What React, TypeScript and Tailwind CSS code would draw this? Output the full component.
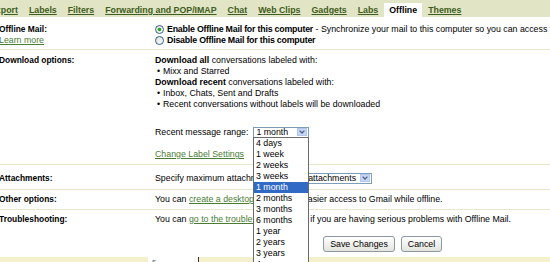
import React from "react";

const tabs = ["Export", "Labels", "Filters", "Forwarding and POP/IMAP", "Chat", "Web Clips", "Gadgets", "Labs", "Offline", "Themes"];
const ranges = ["4 days", "1 week", "2 weeks", "3 weeks", "1 month", "2 months", "3 months", "6 months", "1 year", "2 years", "3 years", "4 years"];

function Radio({ checked }: { checked?: boolean }) {
  return (
    <svg width="9" height="9" viewBox="0 0 9 9" className="shrink-0 mr-[3px]">
      <defs>
        <linearGradient id={checked ? "rg1" : "rg2"} x1="0" y1="0" x2="1" y2="1">
          <stop offset="0" stopColor="#dcdcd6" />
          <stop offset="1" stopColor="#ffffff" />
        </linearGradient>
      </defs>
      <circle cx="4.5" cy="4.5" r="4" fill={`url(#${checked ? "rg1" : "rg2"})`} stroke="#24507f" strokeWidth="0.9" />
      {checked && <circle cx="4.5" cy="4.5" r="1.8" fill="#2aa22a" />}
    </svg>
  );
}

function Chevron() {
  return (
    <svg width="6" height="4" viewBox="0 0 6 4">
      <path d="M0.6 0.6 L3 3 L5.4 0.6" fill="none" stroke="#4d6185" strokeWidth="1.3" />
    </svg>
  );
}

function SelectBox({ text, width, className = "" }: { text: string; width: string; className?: string }) {
  return (
    <div className={`flex items-center h-[11px] border border-[#7f9db9] bg-white ${width} ${className}`}>
      <span className="pl-[2px] leading-[9px] whitespace-nowrap">{text}</span>
      <span className="ml-auto mr-px w-[10px] h-[8px] bg-[#c6d5f6] border border-[#b3c6ee] flex items-center justify-center">
        <Chevron />
      </span>
    </div>
  );
}

export default function App() {
  return (
    <div className="relative w-[550px] h-[262px] overflow-hidden bg-white text-black text-[8.8px] leading-[11px] font-['Liberation_Sans',Arial,sans-serif]">
      {/* Tab bar */}
      <div className="h-[17px] bg-[#e1e4c5] flex items-end">
        <div className="flex items-end gap-[1px] ml-[-15px] whitespace-nowrap">
          {tabs.map((t) =>
            t === "Offline" ? (
              <span key={t} className="px-[5px] h-[14px] leading-[14px] bg-white font-bold text-black">
                {t}
              </span>
            ) : (
              <span key={t} className="px-[5px] h-[14px] leading-[14px] font-bold text-[#3e5d20] underline">
                {t}
              </span>
            )
          )}
        </div>
      </div>

      {/* Offline Mail */}
      <div className="flex pt-[7px] pb-[3px] border-b border-[#e7e7d0]">
        <div className="w-[156px] shrink-0 ml-[-1px]">
          <div className="font-bold text-[8.4px]">Offline Mail:</div>
          <div className="text-[#4a7c35] underline">Learn more</div>
        </div>
        <div className="whitespace-nowrap">
          <div className="flex items-center h-[11px]">
            <Radio checked />
            <span className="font-bold tracking-[-0.2px]">Enable Offline Mail for this computer</span>
            <span>&nbsp;- Synchronize your mail to this computer so you can access your mail even when offline</span>
          </div>
          <div className="flex items-center h-[11px]">
            <Radio />
            <span className="font-bold tracking-[-0.2px]">Disable Offline Mail for this computer</span>
          </div>
        </div>
      </div>

      {/* Download options */}
      <div className="flex pt-[5px] pb-[4px] border-b border-[#e7e7d0]">
        <div className="w-[156px] shrink-0 ml-[-1px] font-bold text-[8.4px]">Download options:</div>
        <div className="whitespace-nowrap">
          <div>
            <span className="font-bold">Download all</span> conversations labeled with:
          </div>
          <div className="flex">
            <span className="w-[8px] pl-[2px]">•</span>Mixx and Starred
          </div>
          <div>
            <span className="font-bold">Download recent</span> conversations labeled with:
          </div>
          <div className="flex">
            <span className="w-[8px] pl-[2px]">•</span>Inbox, Chats, Sent and Drafts
          </div>
          <div className="flex">
            <span className="w-[8px] pl-[2px]">•</span>Recent conversations without labels will be downloaded
          </div>
          <div className="flex items-center h-[12px] mt-[16px]">
            <span>Recent message range:</span>
            <SelectBox text="1 month" width="w-[56px]" className="ml-[5px]" />
          </div>
          <div className="mt-[11px] text-[#4a7c35] underline">Change Label Settings</div>
        </div>
      </div>

      {/* Attachments */}
      <div className="flex items-center pt-[7px] pb-[5px] border-b border-[#e7e7d0]">
        <div className="w-[156px] shrink-0 ml-[-1px] font-bold text-[8.4px]">Attachments:</div>
        <div className="flex items-center h-[12px] whitespace-nowrap">
          <span>Specify maximum attachment size:</span>
          <SelectBox text="All attachments" width="w-[79px]" className="ml-[2px]" />
        </div>
      </div>

      {/* Other options */}
      <div className="flex pt-[4px] pb-[4px] border-b border-[#e7e7d0]">
        <div className="w-[156px] shrink-0 ml-[-1px] font-bold text-[8.4px]">Other options:</div>
        <div className="whitespace-nowrap">
          You can <span className="text-[#4a7c35] underline">create a desktop shortcut</span> for easier access to Gmail while offline.
        </div>
      </div>

      {/* Troubleshooting */}
      <div className="flex pt-[4px]">
        <div className="w-[156px] shrink-0 ml-[-1px] font-bold text-[8.4px]">Troubleshooting:</div>
        <div className="whitespace-nowrap">
          You can <span className="text-[#4a7c35] underline">go to the troubleshooting page</span> if you are having serious problems with Offline Mail.
        </div>
      </div>

      {/* Buttons */}
      <div className="flex gap-[6px] mt-[11px] pl-[323px]">
        <button className="w-[72px] h-[16px] rounded-[3px] border border-[#8c98a6] bg-linear-to-b from-white to-[#e4e4de] text-[8.8px] leading-[14px] text-black">
          Save Changes
        </button>
        <button className="w-[41px] h-[16px] rounded-[3px] border border-[#8c98a6] bg-linear-to-b from-white to-[#e4e4de] text-[8.8px] leading-[14px] text-black">
          Cancel
        </button>
      </div>

      {/* Bottom strip */}
      <div className="flex mt-[5px] h-[6px]">
        <div className="w-[148px] bg-[#f3f0cb]" />
        <div className="w-[50px] bg-white overflow-hidden pl-[4px] text-[8px] leading-[10px] text-[#555]">s</div>
        <div className="w-px bg-[#333]" />
        <div className="flex-1 bg-[#f3f0cb]" />
      </div>

      {/* Open dropdown list */}
      <div className="absolute left-[253px] top-[137px] w-[56px] bg-white border border-[#6a6a6a] whitespace-nowrap">
        {ranges.map((r) =>
          r === "1 month" ? (
            <div key={r} className="h-[11px] leading-[11px] pl-[2px] bg-[#316ac5] text-white">
              {r}
            </div>
          ) : (
            <div key={r} className="h-[11px] leading-[11px] pl-[2px]">
              {r}
            </div>
          )
        )}
      </div>
    </div>
  );
}
